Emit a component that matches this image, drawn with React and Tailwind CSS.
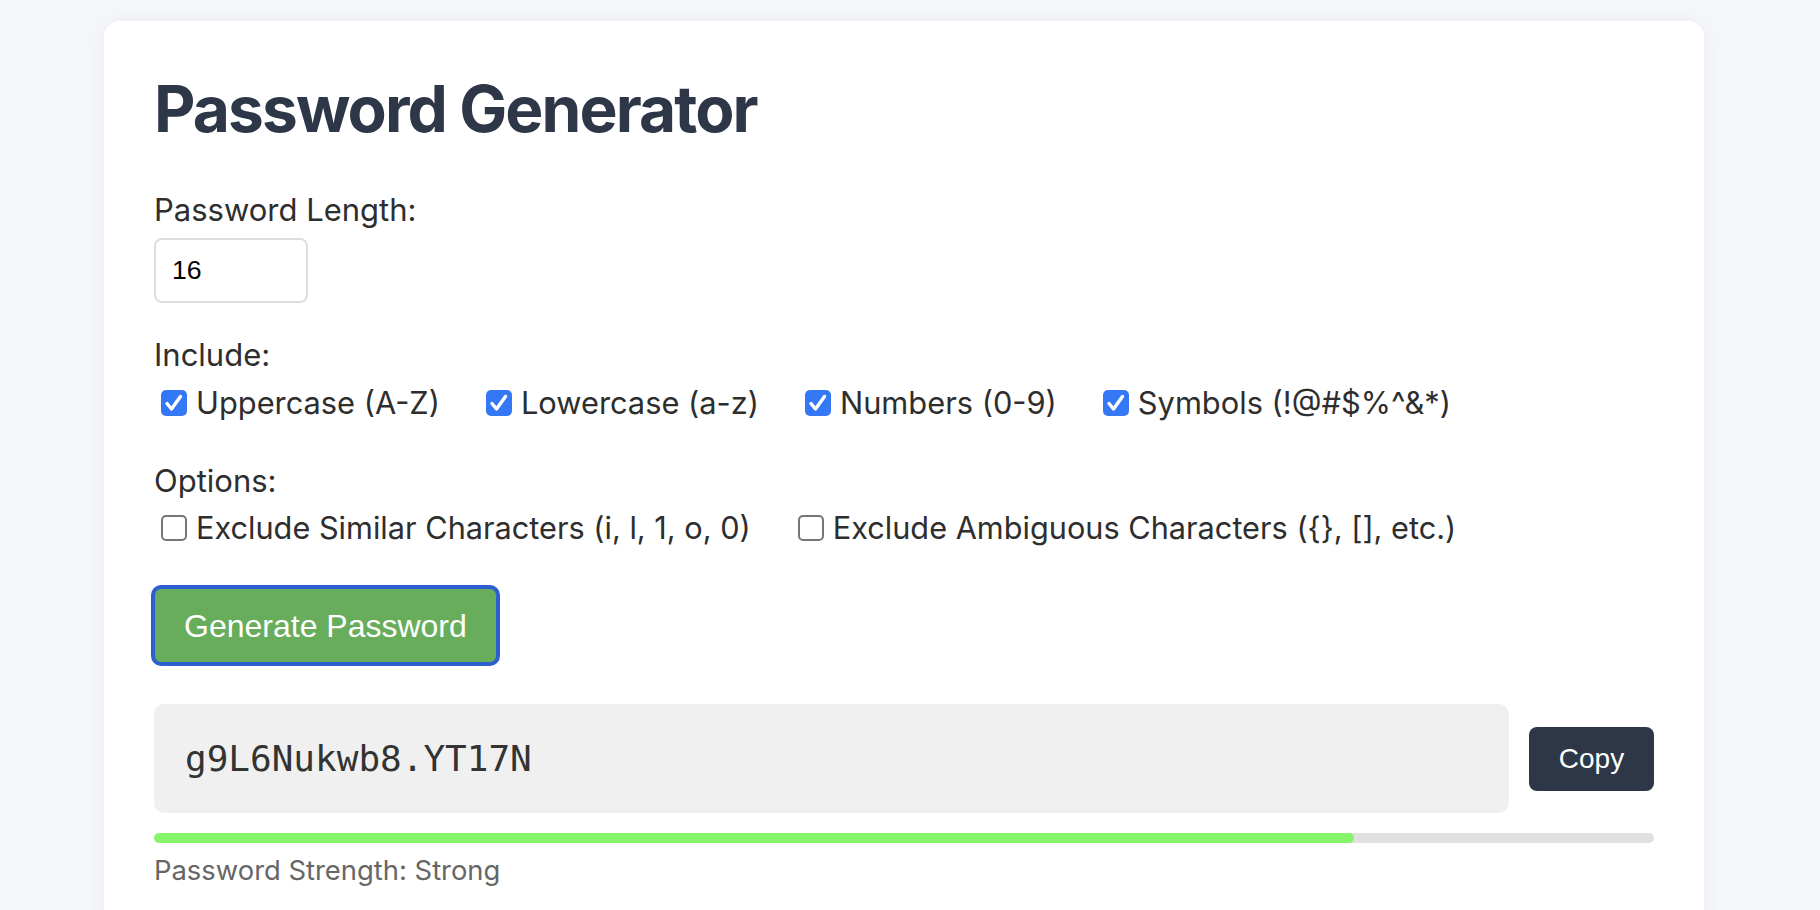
import React, { useState } from 'react';

const Checkbox = ({ checked, onChange, label, className = '' }) => (
  <label className={`flex h-[36px] items-center cursor-pointer ${className}`}>
    <span
      onClick={onChange}
      className={`ml-[7px] mr-[9px] flex h-[26px] w-[26px] shrink-0 items-center justify-center rounded-[5px] ${
        checked ? 'bg-[#3478f6]' : 'border-2 border-[#767676] bg-white'
      }`}
    >
      {checked && (
        <svg width="26" height="26" viewBox="0 0 26 26">
          <path d="M6 13.5 L10.5 19 L19.5 6.5" stroke="white" strokeWidth="3.4" fill="none" strokeLinecap="round" strokeLinejoin="round" />
        </svg>
      )}
    </span>
    <span>{label}</span>
  </label>
);

const App = () => {
  const [length, setLength] = useState(16);
  const [include, setInclude] = useState({ upper: true, lower: true, numbers: true, symbols: true });
  const [options, setOptions] = useState({ similar: false, ambiguous: false });
  const [password] = useState('g9L6Nukwb8.YT17N');

  const toggleInclude = (key) => setInclude(prev => ({ ...prev, [key]: !prev[key] }));
  const toggleOption = (key) => setOptions(prev => ({ ...prev, [key]: !prev[key] }));

  return (
    <div className="min-h-screen bg-[#f5f7fa] pt-[21px] pr-[12px] flex justify-center font-['Inter',sans-serif] text-[#2e2e2e]">
      <div className="w-[1600px] bg-white rounded-[16px] shadow-[0_0_24px_rgba(0,0,0,0.05)] px-[50px] pt-[50px] pb-[60px]">
        <h1 className="text-[64px] leading-[1.2] font-bold text-[#2d3748] tracking-[-1.9px] mb-[43px]">Password Generator</h1>

        {/* Length */}
        <label className="block text-[31px] leading-[38.4px] mb-[9px]">Password Length:</label>
        <input
          type="number"
          value={length}
          onChange={(e) => setLength(e.target.value)}
          className="block w-[154px] h-[65px] border-2 border-[#dddddd] rounded-[8px] px-[16px] text-[26.67px] text-black font-['Liberation_Sans',Arial,sans-serif] outline-none"
        />

        {/* Include */}
        <div className="mt-[33px] text-[31px] leading-[38.4px] mb-[10px]">Include:</div>
        <div className="flex items-center text-[30.8px]">
          <Checkbox className="mr-[39px]" checked={include.upper} onChange={() => toggleInclude('upper')} label="Uppercase (A-Z)" />
          <Checkbox className="mr-[39px]" checked={include.lower} onChange={() => toggleInclude('lower')} label="Lowercase (a-z)" />
          <Checkbox className="mr-[39px]" checked={include.numbers} onChange={() => toggleInclude('numbers')} label="Numbers (0-9)" />
          <Checkbox checked={include.symbols} onChange={() => toggleInclude('symbols')} label="Symbols (!@#$%^&*)" />
        </div>

        {/* Options */}
        <div className="mt-[41px] text-[31px] leading-[38.4px] mb-[10px]">Options:</div>
        <div className="flex items-center text-[30.7px]">
          <Checkbox className="mr-[40px]" checked={options.similar} onChange={() => toggleOption('similar')} label="Exclude Similar Characters (i, l, 1, o, 0)" />
          <Checkbox checked={options.ambiguous} onChange={() => toggleOption('ambiguous')} label="Exclude Ambiguous Characters ({}, [], etc.)" />
        </div>

        <button className="mt-[39px] -ml-[3px] block h-[81px] px-[29px] bg-[#67ad5c] border-[4px] border-[#2d5fd1] rounded-[10px] text-white text-[32px] font-['Liberation_Sans',Arial,sans-serif]">
          Generate Password
        </button>

        {/* Result */}
        <div className="mt-[38px] flex items-center gap-[20px]">
          <div className="flex-1 h-[109px] flex items-center bg-[#f0f0f0] rounded-[10px] px-[31px] font-['DejaVu_Sans_Mono',monospace] text-[36px] text-[#333]">
            {password}
          </div>
          <button className="h-[64px] w-[125px] bg-[#2d3748] rounded-[8px] text-white text-[28px] font-['Liberation_Sans',Arial,sans-serif]">
            Copy
          </button>
        </div>

        <div className="mt-[20px] h-[10px] rounded-full bg-[#e0e0e0] overflow-hidden">
          <div className="h-full bg-[#85f66a] rounded-full" style={{ width: '80%' }} />
        </div>
        <div className="mt-[11px] text-[27.4px] leading-[33.6px] text-[#666]">Password Strength: Strong</div>
      </div>
    </div>
  );
};

export default App;
